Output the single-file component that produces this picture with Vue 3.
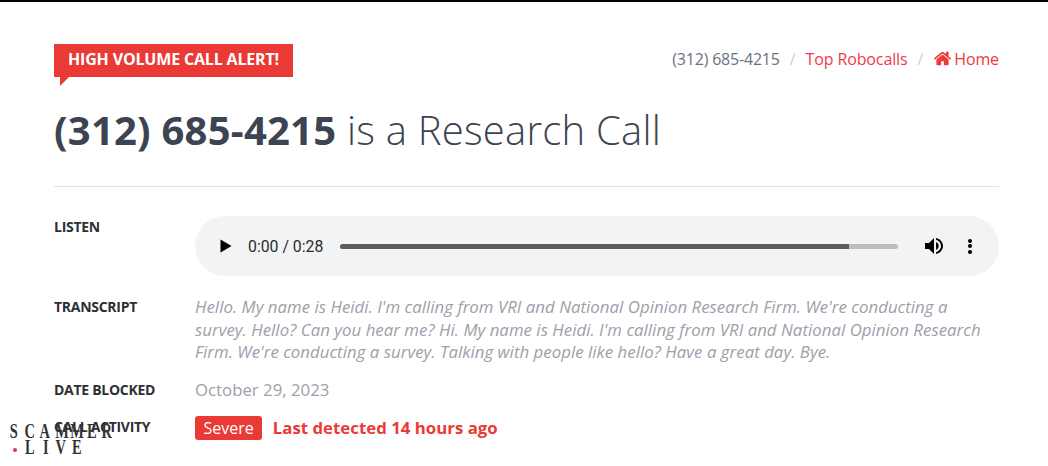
<template>
  <div class="page">
    <!-- Header -->
    <div class="top-row">
      <div class="alert-badge">HIGH VOLUME CALL ALERT!</div>
      <nav class="crumbs">
        <span class="phone">(312) 685-4215</span>
        <span class="sep">/</span>
        <a>Top Robocalls</a>
        <span class="sep">/</span>
        <a class="home-link">
          <svg class="home-icon" viewBox="0 0 1792 1792">
            <path fill="currentColor" d="M1472 992v480q0 26-19 45t-45 19h-384v-384h-256v384h-384q-26 0-45-19t-19-45v-480q0-1 .5-3t.5-3l575-474 575 474q1 2 1 6zm223-69l-62 74q-8 9-21 11h-3q-13 0-21-7l-692-577-692 577q-12 8-24 7-13-2-21-11l-62-74q-8-10-7-23.5t11-21.5l719-599q32-26 76-26t76 26l244 204v-195q0-14 9-23t23-9h192q14 0 23 9t9 23v408l219 182q10 8 11 21.5t-7 23.5z" />
          </svg>
          Home
        </a>
      </nav>
    </div>

    <h1><strong>(312) 685-4215</strong> is a Research Call</h1>
    <hr />

    <!-- Details -->
    <div class="details">
      <div class="label">LISTEN</div>
      <div class="player">
        <svg class="play" viewBox="0 0 12 14"><path d="M0.5 0.5 L11.5 7 L0.5 13.5 Z" /></svg>
        <span class="time">0:00 / 0:28</span>
        <div class="track"><div class="track-fill" :style="{ width: progress + '%' }"></div></div>
        <svg class="volume" viewBox="0 0 18 18">
          <path d="M0 6v6h4l5 5V1L4 6H0z" />
          <path d="M11 5v8c1.6-.7 2.7-2.3 2.7-4S12.600 5.700 11 5z" />
          <path d="M11 1v1.800c2.800.8 5 3.400 5 6.200s-2.200 5.400-5 6.200V17c4-.9 7-4 7-8s-3-7.100-7-8z" />
        </svg>
        <div class="dots"><i></i><i></i><i></i></div>
      </div>

      <div class="label">TRANSCRIPT</div>
      <div class="transcript">
        Hello. My name is Heidi. I'm calling from VRI and National Opinion Research Firm. We're conducting a survey. Hello? Can you hear me? Hi. My name is Heidi. I'm calling from VRI and National Opinion Research Firm. We're conducting a survey. Talking with people like hello? Have a great day. Bye.
      </div>

      <div class="label">DATE BLOCKED</div>
      <div class="date">October 29, 2023</div>

      <div class="label">CALL ACTIVITY</div>
      <div class="activity">
        <span class="severe">Severe</span>
        <span class="detected">Last detected 14 hours ago</span>
      </div>
    </div>

    <!-- Watermark -->
    <div class="watermark">
      <div class="wm-row">
        <span v-for="(ch, i) in 'SCAMMER'" :key="i" class="wm-letter">{{ ch }}</span>
      </div>
      <div class="wm-row wm-second">
        <i></i>
        <span v-for="(ch, i) in 'LIVE'" :key="i" class="wm-letter">{{ ch }}</span>
      </div>
    </div>
  </div>
</template>

<script setup>
const progress = 91.2
</script>

<style>
html,
body {
  margin: 0;
  background: #fff;
  overflow: hidden;
}
</style>

<style scoped>
.page {
  position: relative;
  box-sizing: border-box;
  height: 466px;
  border-top: 2px solid #000;
  padding: 42px 49px 0 54px;
  font-family: "Open Sans", sans-serif;
  overflow: hidden;
}
.top-row {
  display: flex;
  justify-content: space-between;
  align-items: center;
  height: 33px;
}
.alert-badge {
  position: relative;
  height: 33px;
  line-height: 31px;
  padding: 0 14px;
  background: #ea3a36;
  color: #fff;
  font-size: 16px;
  font-weight: 700;
  letter-spacing: -0.17px;
}
.alert-badge::after {
  content: "";
  position: absolute;
  left: 6px;
  top: 33px;
  border-top: 9px solid #ea3a36;
  border-right: 9px solid transparent;
}
.crumbs {
  display: flex;
  align-items: center;
  padding-bottom: 4px;
  font-size: 16px;
  color: #6b7280;
  letter-spacing: -0.12px;
}
.crumbs a {
  color: #ef3b4a;
}
.phone {
  letter-spacing: -0.2px;
}
.sep {
  margin: 0 10px;
  color: #cbd0d6;
}
.crumbs .home-link {
  display: flex;
  align-items: center;
  gap: 2px;
  color: #ee3a3a;
}
.home-icon {
  width: 19px;
  height: 19px;
}
h1 {
  margin: 25px 0 0;
  height: 84px;
  border: 0;
  font-size: 40px;
  line-height: 56px;
  font-weight: 300;
  color: #3d4451;
  letter-spacing: 0.23px;
}
h1 strong {
  font-weight: 700;
}
hr {
  margin: 0;
  border: 0;
  border-top: 1px solid #e0e1e3;
}
.details {
  display: grid;
  grid-template-columns: 141px 804px;
  margin-top: 29px;
}
.label {
  font-size: 14px;
  line-height: 22px;
  font-weight: 700;
  color: #2d2f33;
  letter-spacing: -0.28px;
}
.player {
  display: flex;
  align-items: center;
  height: 60px;
  margin-bottom: 20px;
  border-radius: 30px;
  background: #f1f3f4;
}
.play {
  width: 12px;
  height: 14px;
  margin-left: 25px;
  fill: #000;
}
.time {
  margin-left: 16px;
  font-family: Roboto, sans-serif;
  font-size: 15.800px;
  color: #2b2b2b;
}
.track {
  width: 558px;
  height: 5px;
  margin-left: 17px;
  border-radius: 3px;
  background: #bdbdbd;
  overflow: hidden;
}
.track-fill {
  height: 100%;
  background: #5c5c5c;
}
.volume {
  width: 18px;
  height: 18px;
  margin-left: 27px;
  fill: #000;
}
.dots {
  display: flex;
  flex-direction: column;
  gap: 1.500px;
  margin-left: 25px;
}
.dots i {
  width: 4px;
  height: 4px;
  border-radius: 50%;
  background: #000;
}
.transcript {
  margin-bottom: 15px;
  font-size: 16.800px;
  line-height: 22.700px;
  font-style: italic;
  color: #9ca0aa;
  letter-spacing: 0.04px;
}
.date {
  margin-bottom: 14px;
  font-size: 16.800px;
  line-height: 22.700px;
  color: #9ca0aa;
}
.activity {
  display: flex;
  align-items: center;
  gap: 10.500px;
  height: 24px;
}
.severe {
  padding: 0 8.500px;
  line-height: 24px;
  border-radius: 3px;
  background: #ea3a36;
  color: #fff;
  font-size: 16px;
}
.detected {
  font-size: 16.800px;
  font-weight: 700;
  color: #ea3a36;
  letter-spacing: 0.02px;
}
/* sits on top of the last label, same as in the capture */
.watermark {
  position: absolute;
  left: 6px;
  top: 422px;
  font-family: "Liberation Serif", serif;
  font-size: 20px;
  font-weight: 700;
  line-height: 15.500px;
  color: #333;
}
.wm-row {
  display: flex;
}
.wm-letter {
  width: 15.500px;
  text-align: center;
  transform: scaleX(0.72);
}
.wm-second {
  padding-left: 6.500px;
}
.wm-second i {
  align-self: flex-end;
  width: 4px;
  height: 4px;
  margin: 0 5.750px 3px 0;
  border-radius: 50%;
  background: #d6336c;
}
</style>
